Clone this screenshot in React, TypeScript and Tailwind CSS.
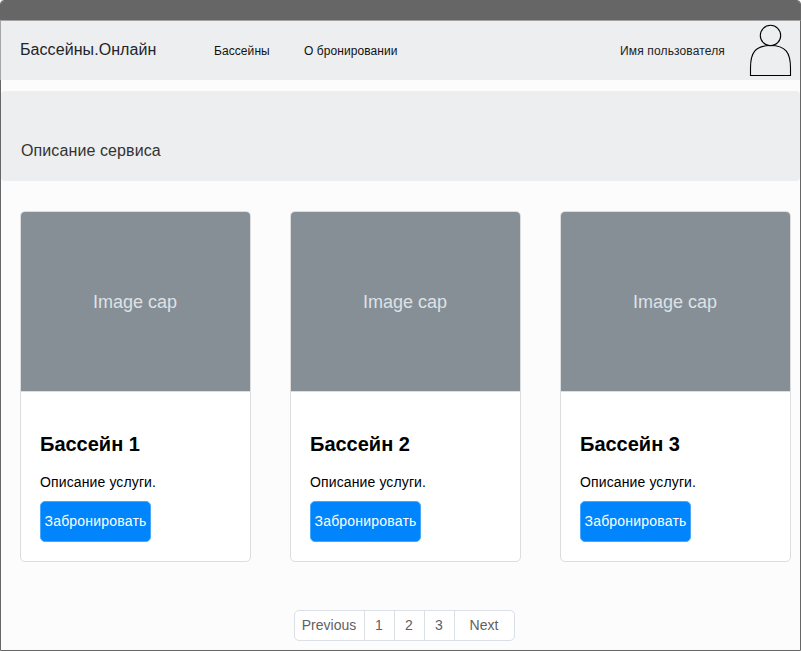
const pools = [1, 2, 3];

function UserIcon() {
  return (
    <svg className="block h-[53px] w-[43px]" viewBox="0 0 43 53" fill="none" stroke="#000" strokeWidth="1.1">
      <circle cx="21.5" cy="11.5" r="10.2" />
      <path d="M1.5 51.5 V44 C1.5 28.5 6.5 21.5 21.5 21.5 S41.5 28.5 41.5 44 V51.5 Z" />
    </svg>
  );
}

function Header() {
  return (
    <header className="-mx-px flex h-[60px] shrink-0 items-start border border-b-0 border-t-[#a5a2a3] border-l-[#a5a5a5] border-r-[#666] bg-[#edeef0] pl-[19px] pr-2 text-[#212529]">
      <div className="mt-[17px] w-[194px] whitespace-nowrap text-[16px] leading-6 tracking-[0.07px] text-[#212529]">Бассейны.Онлайн</div>
      <nav className="mt-[20px] flex whitespace-nowrap text-[12px] leading-5 tracking-[0.08px] text-[#111]">
        <a className="w-[90px]">Бассейны</a>
        <a>О бронировании</a>
      </nav>
      <div className="ml-auto mt-[20px] mr-[24px] whitespace-nowrap text-[12px] leading-5 tracking-[0.14px] text-[#222]">Имя пользователя</div>
      <div className="mt-[3px]"><UserIcon /></div>
    </header>
  );
}

function PoolCard({ id }: { id: number }) {
  return (
    <article className="h-[351px] w-[231px] overflow-hidden rounded-[5px] border border-[#dcdddf] bg-white">
      <div className="flex h-[180px] items-center justify-center border-b border-[#dcdddf] bg-[#868e96] pr-px pt-[2px] text-[18px] text-[#dee2e6]">
        <span>Image cap</span>
      </div>
      <div className="pl-[19px]">
        <h2 className="pt-[38px] text-[20px] font-bold leading-7 text-black">Бассейн {id}</h2>
        <p className="mt-[14px] text-[14px] leading-5 tracking-[0.12px] text-black">Описание услуги.</p>
        <button className="mt-[9px] flex h-[41px] w-[111px] items-center justify-center whitespace-nowrap rounded-[5px] border border-[#4aa8fc] bg-[#0085fc] text-[14px] tracking-[0.2px] text-white">
          Забронировать
        </button>
      </div>
    </article>
  );
}

function Pagination() {
  return (
    <nav className="mx-auto flex h-[31px] w-[221px] rounded-[5px] border border-[#dbdfe6] bg-white text-[14px] leading-[29px] text-[#5f6163]">
      <span className="w-[70px] border-r border-[#dbdfe6] pr-px text-center">Previous</span>
      {pools.map((n) => (
        <span key={n} className="w-[30px] border-r border-[#dbdfe6] pr-px text-center">{n}</span>
      ))}
      <span className="flex-1 pr-px text-center">Next</span>
    </nav>
  );
}

export default function App() {
  return (
    <div className="flex h-[651px] w-[801px] flex-col rounded-t-[4px] border border-[#666] bg-[#fcfcfc] font-['Liberation_Sans',Arial,sans-serif]">
      <div className="h-[19px] shrink-0 rounded-t-[3px] bg-[#666]" />
      <Header />
      <section className="mt-[11px] flex h-[90px] shrink-0 items-start rounded-[4px] bg-[#edeef0] pl-[20px] text-[16px] leading-6 tracking-[0.1px] text-[#333]">
        <span className="mt-[48px]">Описание сервиса</span>
      </section>
      <main className="mt-[30px] flex gap-[39px] pl-[19px]">
        {pools.map((id) => <PoolCard key={id} id={id} />)}
      </main>
      <div className="mt-[48px] pr-px pl-[9px]"><Pagination /></div>
    </div>
  );
}
